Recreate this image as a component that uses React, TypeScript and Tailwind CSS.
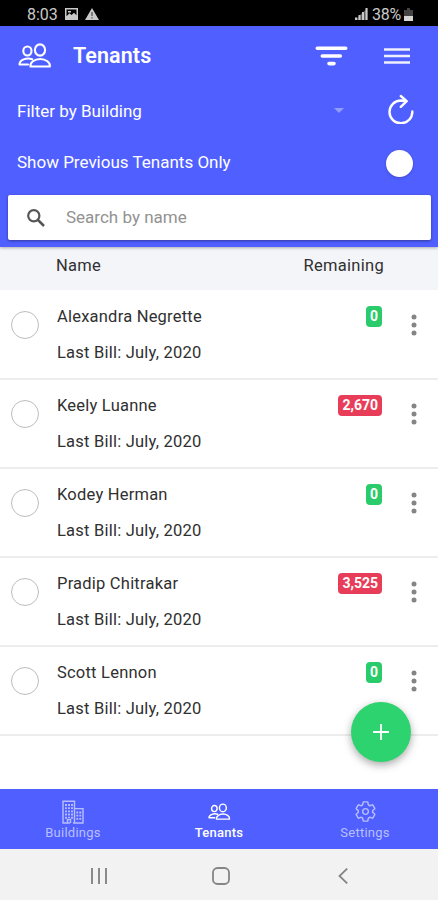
import type { ReactNode } from 'react';
import { IoSettingsOutline } from 'react-icons/io5';

type Tenant = { name: string; lastBill: string; remaining: number };

const tenants: Tenant[] = [
  { name: 'Alexandra Negrette', lastBill: 'July, 2020', remaining: 0 },
  { name: 'Keely Luanne', lastBill: 'July, 2020', remaining: 2670 },
  { name: 'Kodey Herman', lastBill: 'July, 2020', remaining: 0 },
  { name: 'Pradip Chitrakar', lastBill: 'July, 2020', remaining: 3525 },
  { name: 'Scott Lennon', lastBill: 'July, 2020', remaining: 0 },
];

function PeopleIcon({ className }: { className: string }) {
  return (
    <svg viewBox="0 0 34 26" fill="none" stroke="currentColor" strokeWidth="2.1" strokeLinecap="round" strokeLinejoin="round" className={className}>
      <ellipse cx="22" cy="7" rx="5.1" ry="5.6" />
      <path d="M12.500 23.500h19.300c.8-3.900-3.900-7.500-9.600-7.500s-10.500 3.600-9.700 7.500z" />
      <ellipse cx="9.400" cy="8" rx="4.100" ry="4.500" />
      <path d="M14.200 16.300C8.600 14.300 1.400 16.800 1.500 21.500H10" />
    </svg>
  );
}

function BuildingsIcon() {
  return (
    <svg viewBox="0 0 22 24" fill="none" stroke="currentColor" strokeWidth="1.4" className="h-[24px] w-[22px]">
      <path d="M1 23V1.200h11.500V23M12.500 8.600H21V23M.4 23H8M11 23h10.600M5.500 23v-3.500h3V23" />
      <path strokeWidth="1.900" strokeDasharray="1.900 1.300" d="M4 4v15M7 4v14M10 4v15M15.300 11.500V21M18.300 11.500V21" />
    </svg>
  );
}

function StatusBar() {
  return (
    <div className="flex h-[26px] shrink-0 items-center justify-between bg-black pr-[25px] pl-[27px] pt-[2px] text-[16px] text-[#c9c9c9]">
      <div className="flex items-center">
        <span className="w-[38px] pt-px">8:03</span>
        <svg viewBox="0 0 13 12" className="h-[12px] w-[13px]">
          <path fill="#c9c9c9" fillRule="evenodd" d="M0 0h13v12H0zM1.500 1.500v6.800l3-3 2 1.800 2.500-2.300 2.500 2.500V1.500z" />
          <path fill="#c9c9c9" d="M3 3h3v1.500H3z" />
        </svg>
        <svg viewBox="0 0 14 12" className="ml-[7px] h-[12px] w-[14px]">
          <path fill="#c9c9c9" d="M7 0l7 12H0z" />
          <path stroke="#555" strokeWidth="1.300" d="M7 4v4M7 9.200v1.300" />
        </svg>
      </div>
      <div className="flex items-center">
        <svg viewBox="0 0 13 12" className="mr-[4px] h-[12px] w-[13px]" fill="#c9c9c9">
          <path d="M0 9.500h2V12H0zM3.500 7h2v5h-2zM7 4h2v8H7zM10.500 0h2v12h-2z" />
          <path opacity=".45" d="M0 12L12.500 0v12z" />
        </svg>
        <span className="w-[31px] pt-px tracking-[-0.200px]">38%</span>
        <svg viewBox="0 0 9 13" className="ml-px h-[13px] w-[9px]">
          <path fill="#444" d="M3 0h3v2h3v6H0V2h3z" />
          <path fill="#d6d6d6" d="M0 8h9v5H0z" />
        </svg>
      </div>
    </div>
  );
}

function Header() {
  return (
    <header className="z-10 flex h-[221px] shrink-0 flex-col bg-[#505fff] text-white shadow-[0_1px_3px_rgba(0,0,0,0.3)]">
      <div className="flex h-[60px] items-center pr-[28px] pl-[18px]">
        <PeopleIcon className="h-[26px] w-[34px]" />
        <h1 className="ml-[21px] pt-px text-[21.500px] font-semibold tracking-[0.100px]">Tenants</h1>
        <svg viewBox="0 0 33 20" className="ml-auto h-[20px] w-[33px]" stroke="currentColor" strokeWidth="3.600" strokeLinecap="round">
          <path d="M2.300 2.200h28.400M7.300 10h18M14 17.600h5" />
        </svg>
        <svg viewBox="0 0 26 18" className="ml-[36px] h-[18px] w-[26px]" stroke="currentColor" strokeWidth="2.700">
          <path d="M0 2.500h26M0 9h26M0 15.500h26" opacity=".9" />
        </svg>
      </div>
      <div className="flex h-[51px] items-center pr-[24px] pl-[17px]">
        <span className="pt-[1px] text-[17px]">Filter by Building</span>
        <svg viewBox="0 0 10 5" className="mr-px mb-[3px] ml-auto h-[5px] w-[10px]" fill="#929cff">
          <path d="M0 0h10L5 5z" />
        </svg>
        <svg viewBox="0 0 26 30" className="mb-[5px] ml-[43px] h-[30px] w-[26px]" fill="none" stroke="currentColor" strokeWidth="2.400" strokeLinecap="round" strokeLinejoin="round">
          <path d="M24.300 17.500A11.400 11.400 0 1 1 13 6.500L18.500 7.200M12.800 2l5.900 5.200-5.900 5.600" />
        </svg>
      </div>
      <div className="flex h-[52px] items-center justify-between pr-[25px] pl-[17px]">
        <span className="text-[17px]">Show Previous Tenants Only</span>
        <span className="size-[27px] rounded-full bg-white shadow-[0_1px_3px_rgba(0,0,0,0.2)]" />
      </div>
      <div className="mr-[7px] ml-[8px] mt-[6px] flex h-[45px] items-center rounded-[2px] bg-white pl-[19px] shadow-[0_1px_3px_rgba(0,0,0,0.4)]">
        <svg viewBox="0 0 18 18" className="mt-px size-[18px]" fill="none" stroke="#555" strokeWidth="2.200">
          <circle cx="6.800" cy="6.800" r="5.600" />
          <path d="M11 11l6 6" strokeWidth="2.500" />
        </svg>
        <span className="ml-[21px] pt-px text-[17px] text-[#929292]">Search by name</span>
      </div>
    </header>
  );
}

function TenantRow({ tenant }: { tenant: Tenant }) {
  return (
    <li className="flex h-[89.100px] border-b-2 border-[#ededee] pr-[21px] pl-[11px] text-[16.500px] text-[#303030]">
      <span className="mt-[20px] size-[28px] rounded-full border border-[#bdbdbd]" />
      <div className="ml-[18px] flex-1 tracking-[0.220px]">
        <p className="mt-[14px] leading-[24px]">{tenant.name}</p>
        <p className="mt-[12px] leading-[24px]">Last Bill: {tenant.lastBill}</p>
      </div>
      <span
        className={`mt-[15px] h-[21px] rounded-[4px] px-[4px] text-[14px] leading-[20px] font-bold text-white ${
          tenant.remaining ? 'bg-[#e83d58]' : 'bg-[#2acb6a]'
        }`}
      >
        {tenant.remaining.toLocaleString('en-US')}
      </span>
      <svg viewBox="0 0 6 22" className="mt-[23px] ml-[29px] h-[22px] w-[6px]" fill="#858585">
        <circle cx="3" cy="3" r="2.500" />
        <circle cx="3" cy="11" r="2.500" />
        <circle cx="3" cy="19" r="2.500" />
      </svg>
    </li>
  );
}

function Tab({ label, active, children }: { label: string; active?: boolean; children: ReactNode }) {
  return (
    <div className={`flex flex-1 flex-col items-center ${active ? 'font-medium text-white' : 'text-[#b8bfff]'}`}>
      <div className="mt-[10px] flex h-[25px] items-center">{children}</div>
      <span className="text-[13px] leading-[17px] tracking-[0.250px]">{label}</span>
    </div>
  );
}

export default function App() {
  return (
    <div className="relative flex h-[900px] w-[438px] flex-col overflow-hidden bg-white font-[Roboto,sans-serif]">
      <StatusBar />
      <Header />
      <div className="flex h-[44px] shrink-0 justify-between border-b border-white bg-[#f4f5f9] pr-[54px] pl-[56px] pt-[7px] text-[16.500px] leading-[24px] tracking-[0.300px] text-[#303030]">
        <span>Name</span>
        <span>Remaining</span>
      </div>
      <ul className="flex-1">
        {tenants.map((tenant) => (
          <TenantRow key={tenant.name} tenant={tenant} />
        ))}
      </ul>
      <button className="absolute top-[702px] left-[351px] flex size-[60px] items-center justify-center rounded-full bg-[#2dd36f] shadow-[0_3px_8px_rgba(0,0,0,0.35)]">
        <svg viewBox="0 0 16 16" className="size-[16px]" stroke="white" strokeWidth="1.800">
          <path d="M8 0v16M0 8h16" />
        </svg>
      </button>
      <nav className="flex h-[60px] shrink-0 bg-[#505fff]">
        <Tab label="Buildings">
          <BuildingsIcon />
        </Tab>
        <Tab label="Tenants" active>
          <PeopleIcon className="h-[18px] w-[23px]" />
        </Tab>
        <Tab label="Settings">
          <IoSettingsOutline className="size-[23px]" />
        </Tab>
      </nav>
      <div className="flex h-[51px] shrink-0 items-center bg-[#f2f2f2] pt-[3px] pl-[91px] text-[#858585]">
        <svg viewBox="0 0 16 16" className="size-[16px]" stroke="currentColor" strokeWidth="1.900">
          <path d="M1 0v16M8 0v16M15 0v16" />
        </svg>
        <svg viewBox="0 0 18 18" className="ml-[105px] size-[18px]" fill="none" stroke="currentColor" strokeWidth="1.800">
          <rect x="1" y="1" width="16" height="16" rx="4.500" />
        </svg>
        <svg viewBox="0 0 10 16" className="ml-[108px] h-[16px] w-[10px]" fill="none" stroke="currentColor" strokeWidth="1.800">
          <path d="M9.200.600L1.500 8l7.700 7.400" />
        </svg>
      </div>
    </div>
  );
}
